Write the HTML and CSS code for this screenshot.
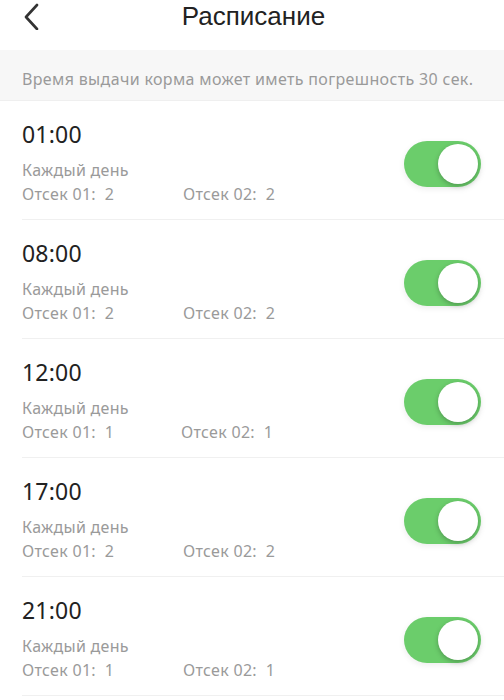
FILE: index.html
```html
<!DOCTYPE html>
<html lang="ru">
<head>
<meta charset="utf-8">
<link rel="stylesheet" href="styles.css">
</head>
<body>
<div class="header">
  <svg class="back" width="20" height="28" viewBox="0 0 20 28"><path d="M15 3 L4 15 L15 27" fill="none" stroke="#333" stroke-width="2.6" stroke-linecap="round" stroke-linejoin="round"/></svg>
  <div class="title">Расписание</div>
</div>
<div class="banner">Время выдачи корма может иметь погрешность 30 сек.</div>
<div class="list">
  <div class="row">
    <div class="info">
      <div class="time">01:00</div>
      <div class="sub">Каждый день</div>
      <div class="portions"><span class="p1">Отсек 01:&nbsp; 2</span><span>Отсек 02:&nbsp; 2</span></div>
    </div>
    <div class="toggle"><div class="knob"></div></div>
  </div>
  <div class="row">
    <div class="info">
      <div class="time">08:00</div>
      <div class="sub">Каждый день</div>
      <div class="portions"><span class="p1">Отсек 01:&nbsp; 2</span><span>Отсек 02:&nbsp; 2</span></div>
    </div>
    <div class="toggle"><div class="knob"></div></div>
  </div>
  <div class="row">
    <div class="info">
      <div class="time">12:00</div>
      <div class="sub">Каждый день</div>
      <div class="portions"><span class="p1 narrow">Отсек 01:&nbsp; 1</span><span>Отсек 02:&nbsp; 1</span></div>
    </div>
    <div class="toggle"><div class="knob"></div></div>
  </div>
  <div class="row">
    <div class="info">
      <div class="time">17:00</div>
      <div class="sub">Каждый день</div>
      <div class="portions"><span class="p1">Отсек 01:&nbsp; 2</span><span>Отсек 02:&nbsp; 2</span></div>
    </div>
    <div class="toggle"><div class="knob"></div></div>
  </div>
  <div class="row">
    <div class="info">
      <div class="time">21:00</div>
      <div class="sub">Каждый день</div>
      <div class="portions"><span class="p1">Отсек 01:&nbsp; 1</span><span>Отсек 02:&nbsp; 1</span></div>
    </div>
    <div class="toggle"><div class="knob"></div></div>
  </div>
</div>
</body>
</html>
```
FILE: styles.css
```css
* { box-sizing: border-box; }
html, body { margin: 0; padding: 0; background: #fff; }
body {
  font-family: "Noto Sans", "Liberation Sans", sans-serif;
  color: #222;
  width: 504px;
  height: 700px;
  overflow: hidden;
}
.header {
  height: 50px;
  position: relative;
  display: flex;
  justify-content: center;
}
.back {
  position: absolute;
  left: 22px;
  top: 2px;
}
.title {
  font-family: "Liberation Sans", "Noto Sans", sans-serif;
  font-size: 26px;
  line-height: 30px;
  color: #222;
  margin-left: 3px;
  padding-top: 1px;
}
.banner {
  height: 51px;
  background: #f7f7f7;
  border-bottom: 1px solid #efefef;
  padding: 19px 0 0 22px;
  font-size: 16px;
  line-height: 20px;
  color: #9a9a9a;
  letter-spacing: 0.35px;
  white-space: nowrap;
}
.list {
  padding-left: 22px;
}
.row {
  height: 119px;
  border-bottom: 1px solid #f0f0f0;
  display: flex;
  align-items: flex-start;
  justify-content: space-between;
  padding-right: 23px;
}
.info {
  padding-top: 18px;
}
.time {
  font-size: 23px;
  line-height: 30px;
  color: #222;
  letter-spacing: 0.2px;
}
.sub, .portions {
  font-size: 16px;
  line-height: 24px;
  color: #9a9a9a;
  letter-spacing: 0.3px;
}
.sub { margin-top: 9px; }
.p1 {
  display: inline-block;
  width: 161px;
}
.p1.narrow { width: 159px; }
.toggle {
  margin-top: 40px;
  width: 77px;
  height: 46px;
  border-radius: 23px;
  background: #6bcd6b;
  position: relative;
  box-shadow: 0 2px 6px rgba(0,0,0,0.08);
}
.knob {
  position: absolute;
  right: 3px;
  top: 3px;
  width: 40px;
  height: 40px;
  border-radius: 50%;
  background: #fff;
  box-shadow: 0 2px 5px rgba(0,0,0,0.25);
}
```
